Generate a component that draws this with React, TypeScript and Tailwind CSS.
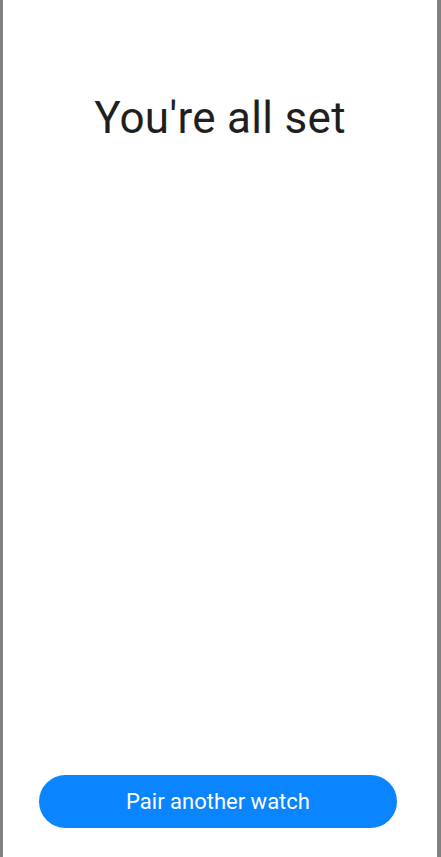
export default function App() {
  return (
    <div className="flex h-[857px] w-full bg-[#808080] pl-[3px] pr-[4px]" style={{ fontFamily: 'Roboto, "Noto Sans", sans-serif' }}>
      <div className="flex flex-1 flex-col bg-white">
        <h1 className="mt-[92px] text-center text-[44px] leading-[52px] tracking-[0.3px] font-normal text-[#1f1f1f]">
          You're all set
        </h1>
        <div className="flex-1" />
        <div className="mb-[29px] ml-[36px] mr-[40px]">
          <button className="h-[53px] w-full rounded-full bg-[#0a84ff] text-[22px] font-normal text-white">
            Pair another watch
          </button>
        </div>
      </div>
    </div>
  )
}
